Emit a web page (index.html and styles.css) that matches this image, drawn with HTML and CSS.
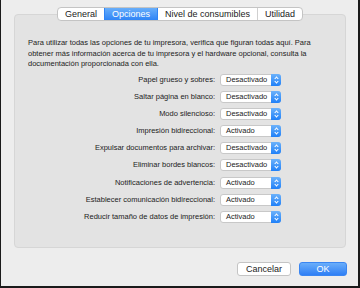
FILE: index.html
```html
<!DOCTYPE html>
<html lang="es">
<head>
  <meta charset="UTF-8">
  <title>Opciones</title>
  <link rel="stylesheet" href="styles.css">
</head>
<body>
  <div class="window">
    <div class="tabs">
      <a class="tab">General</a>
      <a class="tab active">Opciones</a>
      <a class="tab">Nivel de consumibles</a>
      <a class="tab">Utilidad</a>
    </div>
    <div class="panel">
      <p class="intro">Para utilizar todas las opciones de tu impresora, verifica que figuran todas aquí. Para obtener más información acerca de tu impresora y el hardware opcional, consulta la documentación proporcionada con ella.</p>
      <div class="options">
        <label>Papel grueso y sobres:</label>
        <div class="select"><span>Desactivado</span><i class="step"></i></div>
        <label>Saltar página en blanco:</label>
        <div class="select"><span>Desactivado</span><i class="step"></i></div>
        <label>Modo silencioso:</label>
        <div class="select"><span>Desactivado</span><i class="step"></i></div>
        <label>Impresión bidireccional:</label>
        <div class="select"><span>Activado</span><i class="step"></i></div>
        <label>Expulsar documentos para archivar:</label>
        <div class="select"><span>Desactivado</span><i class="step"></i></div>
        <label>Eliminar bordes blancos:</label>
        <div class="select"><span>Desactivado</span><i class="step"></i></div>
        <label>Notificaciones de advertencia:</label>
        <div class="select"><span>Activado</span><i class="step"></i></div>
        <label>Establecer comunicación bidireccional:</label>
        <div class="select"><span>Activado</span><i class="step"></i></div>
        <label>Reducir tamaño de datos de impresión:</label>
        <div class="select"><span>Activado</span><i class="step"></i></div>
      </div>
    </div>
    <div class="buttons">
      <button class="btn">Cancelar</button>
      <button class="btn primary">OK</button>
    </div>
  </div>
</body>
</html>
```

FILE: styles.css
```css
body {
  margin: 0;
  font-family: "Liberation Sans", Arial, sans-serif;
  color: #222;
}

.window {
  width: 360px;
  height: 288px;
  box-sizing: border-box;
  background-color: #ededed;
  border-left: 1px solid #1a1a1a;
  border-right: 2px solid #1a1a1a;
  border-bottom: 2px solid #1a1a1a;
  padding: 7px 12px 0 13px;
  display: flex;
  flex-direction: column;
}

.tabs {
  display: flex;
  align-self: center;
  margin-bottom: -7px;
  position: relative;
  z-index: 1;
  background-color: white;
  border: 1px solid #c4c4c4;
  border-radius: 4px;
  height: 14px;
  box-sizing: border-box;
  overflow: hidden;
}

.tab {
  font-size: 9px;
  line-height: 12px;
  padding: 0 7px;
  color: #222;
  border-left: 1px solid #d0d0d0;
}

.tab:first-child {
  border-left: none;
}

.tab.active {
  background: linear-gradient(#68aefa, #2f84f6);
  color: white;
  border-left-color: #2f84f6;
}

.tab.active + .tab {
  border-left-color: #2f84f6;
}

.panel {
  background-color: #e3e3e3;
  border: 1px solid #d6d6d6;
  border-radius: 4px;
  height: 234px;
  box-sizing: border-box;
  padding: 23px 13px 0 13px;
}

.intro {
  margin: 0;
  font-size: 7.5px;
  line-height: 10.5px;
}

.options {
  display: grid;
  grid-template-columns: 187px 61px;
  column-gap: 5px;
  row-gap: 5.2px;
  margin-top: 4px;
  font-size: 7.5px;
}

.options label {
  text-align: right;
  line-height: 12px;
}

.select {
  display: flex;
  height: 12px;
  box-sizing: border-box;
  background-color: white;
  border: 1px solid #c8c8c8;
  border-radius: 3px;
}

.select span {
  flex: 1;
  padding-left: 5px;
  line-height: 10px;
}

.step {
  width: 10px;
  margin: -1px -1px -1px 0;
  border-radius: 0 3px 3px 0;
  background: linear-gradient(#6cb2fb, #1f80f8);
  position: relative;
}

.step::before,
.step::after {
  content: "";
  position: absolute;
  left: 3.5px;
  width: 2px;
  height: 2px;
  border-left: 1px solid white;
  border-top: 1px solid white;
}

.step::before {
  top: 3px;
  transform: rotate(45deg);
}

.step::after {
  top: 6px;
  transform: rotate(-135deg);
}

.buttons {
  display: flex;
  justify-content: flex-end;
  gap: 8px;
  margin-top: 14px;
  margin-right: -1px;
}

.btn {
  height: 14px;
  padding: 0;
  font-family: "Liberation Sans", Arial, sans-serif;
  font-size: 9px;
  border: 1px solid #c4c4c4;
  border-radius: 3px;
  background-color: white;
  color: #222;
  width: 54px;
}

.btn.primary {
  width: 48px;
  border-color: #3a86f2;
  background: linear-gradient(#6aaefa, #2f7ff5);
  color: white;
}
```
